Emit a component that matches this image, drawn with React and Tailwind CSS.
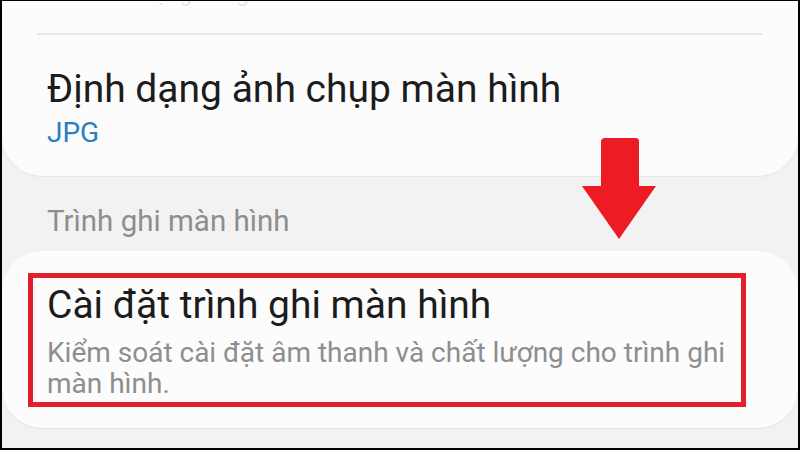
import React from 'react';

const DownArrow = () => (
    <svg className="absolute left-[578px] top-[135px]" width="78" height="106" viewBox="0 0 78 106">
        <path d="M21 6 Q21 2 25 2 L56 2 Q59 2 59 6 L59 50 L76 50 L39 103 L2 50 L21 50 Z" fill="#ed1c24" />
    </svg>
);

const App = () => {
    return (
        <div className="relative w-[800px] h-[450px] overflow-hidden bg-[#f2f2f2] border-x-2 border-t border-b-2 border-black font-['Roboto','Noto_Sans',sans-serif]">
            {/* Định dạng ảnh chụp card */}
            <div className="h-[175px] bg-[#fcfcfc] rounded-b-[40px] shadow-[0_1px_1px_rgba(0,0,0,0.06)] px-[35px] overflow-hidden">
                <div className="h-[8px] overflow-hidden">
                    <p className="-mt-[19px] ml-[6px] text-[22px] text-[#e6e6e6] leading-[24px]">Phím âm lượng trong menu</p>
                </div>
                <div className="mt-[24px] h-[2px] bg-[#e6e6e6] mr-[1px]" />
                <div className="pl-[10px] pt-[32px]">
                    <p className="text-[39px] leading-[44px] text-[#1c1c1c]">Định dạng ảnh chụp màn hình</p>
                    <p className="mt-[6px] text-[28px] leading-[32px] text-[#2680c6]">JPG</p>
                </div>
            </div>

            {/* section header */}
            <div className="h-[75px] pl-[45px] pt-[28px]">
                <p className="text-[29.5px] leading-[34px] text-[#8e8e8e]">Trình ghi màn hình</p>
            </div>

            {/* Trình ghi card */}
            <div className="h-[177px] bg-[#fcfcfc] rounded-[40px] shadow-[0_1px_1px_rgba(0,0,0,0.07)] pt-[22px] pl-[26px]">
                <div className="w-[718px] h-[134px] border-[5px] border-[#e2202c] pl-[14px] pt-[5px]">
                    <p className="text-[39px] leading-[44px] text-[#1c1c1c]">Cài đặt trình ghi màn hình</p>
                    <p className="mt-[10px] text-[28px] leading-[31px] text-[#8e8e8e] w-[690px]">Kiểm soát cài đặt âm thanh và chất lượng cho trình ghi màn hình.</p>
                </div>
            </div>

            <DownArrow />
        </div>
    );
};

export default App;
